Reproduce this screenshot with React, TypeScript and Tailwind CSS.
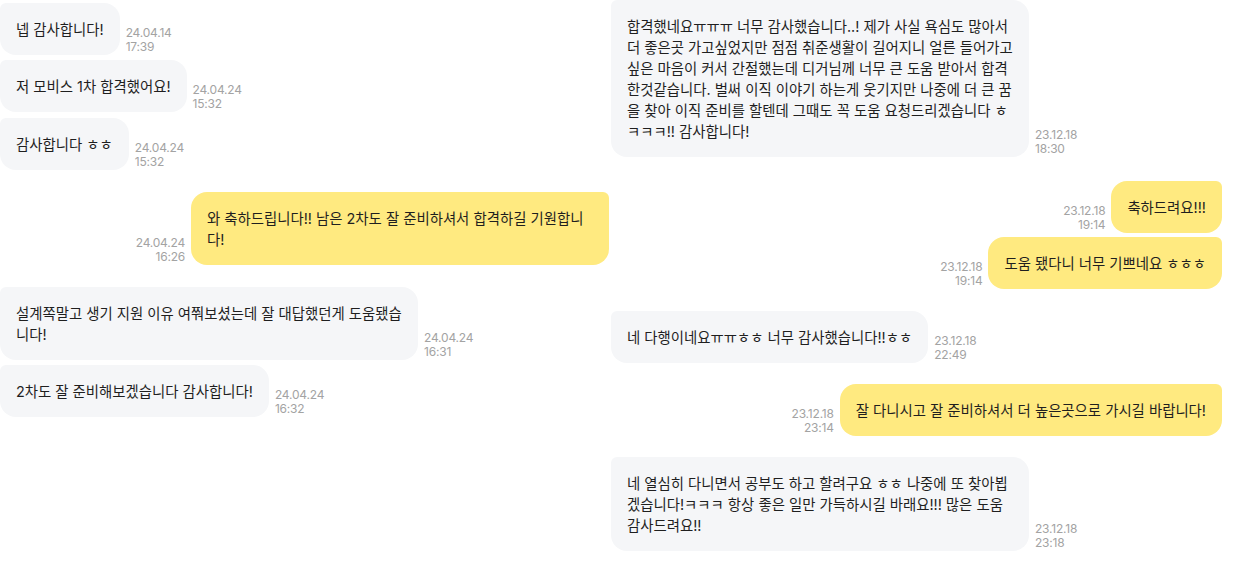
type Msg = {
  mine?: boolean;
  lines: string[];
  date: string;
  time: string;
  mt: string;
  wide?: boolean;
};

const left: Msg[] = [
  { lines: ['넵 감사합니다!'], date: '24.04.14', time: '17:39', mt: 'mt-[3px]' },
  { lines: ['저 모비스 1차 합격했어요!'], date: '24.04.24', time: '15:32', mt: 'mt-[5px]' },
  { lines: ['감사합니다 ㅎㅎ'], date: '24.04.24', time: '15:32', mt: 'mt-[6px]' },
  {
    mine: true,
    wide: true,
    lines: ['와 축하드립니다!! 남은 2차도 잘 준비하셔서 합격하길 기원합니', '다!'],
    date: '24.04.24',
    time: '16:26',
    mt: 'mt-[22px]',
  },
  {
    wide: true,
    lines: ['설계쪽말고 생기 지원 이유 여쭤보셨는데 잘 대답했던게 도움됐습', '니다!'],
    date: '24.04.24',
    time: '16:31',
    mt: 'mt-[22px]',
  },
  { lines: ['2차도 잘 준비해보겠습니다 감사합니다!'], date: '24.04.24', time: '16:32', mt: 'mt-[5px]' },
];

const right: Msg[] = [
  {
    wide: true,
    lines: [
      '합격했네요ㅠㅠㅠ 너무 감사했습니다..! 제가 사실 욕심도 많아서',
      '더 좋은곳 가고싶었지만 점점 취준생활이 길어지니 얼른 들어가고',
      '싶은 마음이 커서 간절했는데 디거님께 너무 큰 도움 받아서 합격',
      '한것같습니다. 벌써 이직 이야기 하는게 웃기지만 나중에 더 큰 꿈',
      '을 찾아 이직 준비를 할텐데 그때도 꼭 도움 요청드리겠습니다 ㅎ',
      'ㅋㅋㅋ!! 감사합니다!',
    ],
    date: '23.12.18',
    time: '18:30',
    mt: 'mt-0',
  },
  { mine: true, lines: ['축하드려요!!!'], date: '23.12.18', time: '19:14', mt: 'mt-[24px]' },
  { mine: true, lines: ['도움 됐다니 너무 기쁘네요 ㅎㅎㅎ'], date: '23.12.18', time: '19:14', mt: 'mt-[4px]' },
  { lines: ['네 다행이네요ㅠㅠㅎㅎ 너무 감사했습니다!!ㅎㅎ'], date: '23.12.18', time: '22:49', mt: 'mt-[22px]' },
  {
    mine: true,
    lines: ['잘 다니시고 잘 준비하셔서 더 높은곳으로 가시길 바랍니다!'],
    date: '23.12.18',
    time: '23:14',
    mt: 'mt-[21px]',
  },
  {
    wide: true,
    lines: [
      '네 열심히 다니면서 공부도 하고 할려구요 ㅎㅎ 나중에 또 찾아뵙',
      '겠습니다!ㅋㅋㅋ 항상 좋은 일만 가득하시길 바래요!!! 많은 도움',
      '감사드려요!!',
    ],
    date: '23.12.18',
    time: '23:18',
    mt: 'mt-[21px]',
  },
];

const Stamp = ({ m }: { m: Msg }) => (
  <div
    className={`mb-[1px] shrink-0 text-[12px] leading-[14px] tracking-[-0.2px] text-[#a3a3a3] ${m.mine ? 'text-right' : 'text-left'}`}
    style={{ fontFamily: 'Inter, "Noto Sans CJK KR", sans-serif' }}
  >
    <div>{m.date}</div>
    <div>{m.time}</div>
  </div>
);

const Bubble = ({ m }: { m: Msg }) => (
  <div
    className={`flex items-end gap-[6px] ${m.mt} ${m.mine ? 'justify-end' : 'justify-start'}`}
  >
    {m.mine && <Stamp m={m} />}
    <div
      className={`px-4 py-[15.5px] text-[14.4px] leading-[21px] text-[#1f1f1f] ${
        m.wide ? 'w-[418px]' : ''
      } ${m.mine ? 'bg-[#ffea80] rounded-2xl rounded-tr-[6px]' : 'bg-[#f5f6f8] rounded-2xl rounded-tl-[6px]'}`}
      style={{ fontFamily: 'Inter, "Noto Sans CJK KR", sans-serif' }}
    >
      {m.lines.map((l, i) => (
        <div key={i} className="whitespace-nowrap">
          {l}
        </div>
      ))}
    </div>
    {!m.mine && <Stamp m={m} />}
  </div>
);

export default function App() {
  return (
    <div className="flex h-[564px] w-[1256px] overflow-hidden bg-white">
      <div className="flex w-[609px] flex-col">
        {left.map((m, i) => (
          <Bubble key={i} m={m} />
        ))}
      </div>
      <div className="ml-[2px] flex w-[611px] flex-col">
        {right.map((m, i) => (
          <Bubble key={i} m={m} />
        ))}
      </div>
    </div>
  );
}
